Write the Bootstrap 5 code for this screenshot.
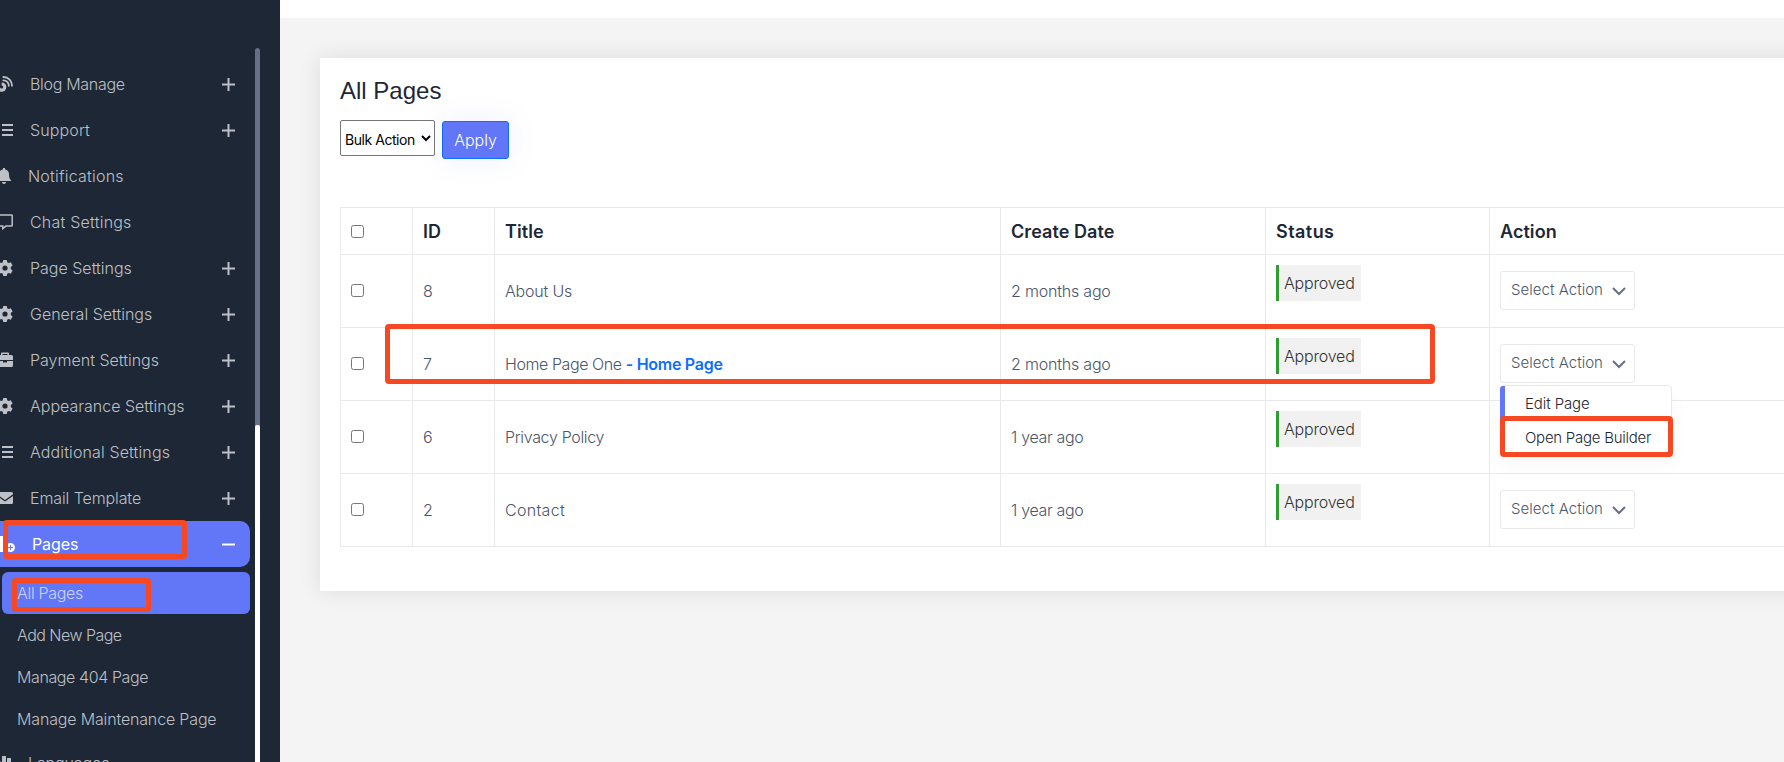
<!DOCTYPE html>
<html lang="en">
<head>
<meta charset="utf-8">
<meta name="viewport" content="width=device-width, initial-scale=1">
<title>All Pages</title>
<link href="https://cdn.jsdelivr.net/npm/bootstrap@5.3.0/dist/css/bootstrap.min.css" rel="stylesheet">
<style>
  body { font-family: Inter, "Liberation Sans", sans-serif; font-weight: 300; background: #f4f4f4; height: 762px; overflow: hidden; color: #4a566b; }
  .side { width: 280px; height: 762px; background: #1e2735; padding-top: 61px; color: #bdc0c6; overflow: hidden; }
  .side-menu { width: 250px; }
  .side-menu a { color: inherit; text-decoration: none; height: 46px; line-height: 46px; font-size: 16px; white-space: nowrap; letter-spacing: 0; }
  .side-menu .ico { width: 16px; height: 16px; margin-left: -3px; flex: none; fill: currentColor; }
  .side-menu .ico-wide { width: 18px; }
  .side-menu .txt { margin-left: 17px; }
  .side-menu .near .txt { margin-left: 15px; }
  .side-menu .pm { width: 13px; height: 13px; margin-left: auto; margin-right: 15px; flex: none; stroke: currentColor; stroke-width: 2; fill: none; }
  .side-menu .current { background: #6177f7; color: #fff; font-weight: 400; border-radius: 0 10px 10px 0; margin-bottom: 5px; }
  .side-menu .sub { height: 42px; line-height: 42px; margin-left: 2px; padding-left: 15px; }
  .side-menu .sub.on { background: #6177f7; border-radius: 6px; color: #ccd2fa; }
  .side-menu .ls-n5 { letter-spacing: -.53px; }
  .side-menu .ls-n4 { letter-spacing: -.4px; }
  .side-menu .ls-n3 { letter-spacing: -.3px; }
  .side-menu .ls-n15 { letter-spacing: -.16px; }
  .side-menu .ls-n1 { letter-spacing: -.1px; }
  .side-menu .ls-1 { letter-spacing: .12px; }
  .side-menu .ls-2 { letter-spacing: .22px; }
  .side-track { left: 255px; top: 48px; width: 5px; height: 714px; background: #667085; border-radius: 3px 3px 0 0; }
  .side-thumb { width: 5px; height: 337px; margin-top: 377px; background: #fff; border-radius: 2px 2px 0 0; }
  .topline { height: 18px; background: #fff; }
  .panel { margin: 40px 0 0 40px; width: 1500px; height: 533px; background: #fff; padding: 16px 20px; box-shadow: 0 0 20px rgba(0,0,0,.1); }
  .panel h4 { font: 400 24px/34px "Liberation Sans", sans-serif; color: #1e2735; margin: 0 0 12px; }
  .bulk { width: 95px; height: 36px; font-size: 14px; font-weight: 400; border: 1px solid #767676; border-radius: 2px; color: #000; padding: 2px 0 0; letter-spacing: -.45px; }
  .btn-apply { width: 67px; height: 38px; margin: 1px 0 0 7px; padding: 0; font-size: 16px; font-weight: 300; color: #fff; background: #6177f7; border: 1px solid #0d6efd; border-radius: 3px; box-shadow: 0 0 30px rgba(97,119,247,.1); }
  .grid-table { width: 1500px; table-layout: fixed; margin: 48px 0 0; border-collapse: collapse; }
  .grid-table th, .grid-table td { border: 1px solid #e8e9ec; padding: 0 10px; vertical-align: middle; font-size: 16px; letter-spacing: -.2px; }
  .grid-table th { height: 47px; font-size: 18px; font-weight: 600; color: #1e2735; letter-spacing: .07px; }
  .grid-table td { height: 73px; }
  .grid-table td.wide { letter-spacing: .3px; }
  .grid-table td.tight { letter-spacing: -.33px; }
  .grid-table th.wide { letter-spacing: .45px; }
  .grid-table input { display: block; width: 13px; height: 13px; margin: 0; }
  .grid-table td input { margin-bottom: 2px; }
  .grid-table b { font-weight: 600; color: #0d6efd; letter-spacing: -.28px; }
  .grid-table .home { letter-spacing: -.42px; }
  .state { display: block; width: 85px; height: 36px; line-height: 37px; margin-top: -17px; border-left: 3px solid #2e9e2e; background: #f1f1f1; color: #333; padding-left: 5px; }
  .pick { width: 135px; height: 39px; margin-top: -1px; border: 1px solid #e8e9ec; border-radius: 3px; background: #fff; padding: 0 8px 0 10px; font-size: 15px; font-weight: 300; color: #4a566b; letter-spacing: .03px; }
  .pick svg { width: 14px; height: 9px; fill: none; stroke: #667085; stroke-width: 2; margin-top: 1px; }
  .pick-menu { left: 0; top: 41px; width: 172px; height: 70px; background: #fff; border: 1px solid #e8e9ec; border-radius: 4px; box-shadow: 0 10px 20px rgba(0,0,0,.03); font-size: 15px; color: #1e2735; z-index: 3; letter-spacing: -.26px; }
  .pick-menu div { height: 34px; line-height: 35px; padding-left: 24px; }
  .pick-menu .hot { border-left: 5px solid #6177f7; padding-left: 20px; margin-left: -1px; border-radius: 3px 0 0 0; letter-spacing: -.1px; }
  .ring { border: 5px solid #f64823; border-radius: 4px; z-index: 5; pointer-events: none; }
  .ring-pages { left: 3px; top: 520px; width: 184px; height: 39px; }
  .ring-all { left: 12px; top: 578px; width: 139px; height: 34px; }
  .ring-row { left: 385px; top: 324px; width: 1050px; height: 60px; }
  .ring-open { left: 1500px; top: 416px; width: 173px; height: 41px; }
</style>
</head>
<body class="d-flex position-relative">
<svg class="d-none">
  <symbol id="plus" viewBox="0 0 13 13"><path d="M0 6.5h13M6.500 0v13"/></symbol>
  <symbol id="minus" viewBox="0 0 13 13"><path d="M0 6.500h13"/></symbol>
  <symbol id="gear" viewBox="0 0 16 16"><path fill-rule="evenodd" d="M6.200 0h3.600l.4 2.300 1.400.8 2.200-.8 1.800 3.100-1.800 1.500v2.200l1.800 1.500-1.800 3.100-2.200-.8-1.400.8-.4 2.300H6.200l-.4-2.300-1.400-.8-2.200.8L.4 10.600l1.800-1.500V6.900L.4 5.400l1.800-3.100 2.200.8 1.400-.8zM8 5.400a2.600 2.600 0 1 0 0 5.200 2.600 2.600 0 0 0 0-5.200z"/></symbol>
  <symbol id="list" viewBox="0 0 16 16"><path d="M0 2h3v2H0zm5 0h11v2H5zM0 7h3v2H0zm5 0h11v2H5zM0 12h3v2H0zm5 0h11v2H5z"/></symbol>
  <symbol id="blog" viewBox="0 0 16 16"><path d="M0 4h3v7a1.600 1.600 0 1 0 1.600-1.600V6.400A4.700 4.700 0 1 1 0 11z"/><path d="M6.300 1C11.500 1 15 4.800 15 9.800M6.300 4.300c3.500 0 5.500 2.500 5.500 5.500" fill="none" stroke="currentColor" stroke-width="1.800" stroke-linecap="round"/></symbol>
  <symbol id="bell" viewBox="0 0 16 16"><path d="M6 0h2v1.300c2.600.5 4 2.400 4 5C12 9.500 12.700 11 14 12.300V13H0v-.7C1.300 11 2 9.500 2 6.300c0-2.600 1.400-4.500 4-5zM5 14h4a2 2 0 0 1-4 0z"/></symbol>
  <symbol id="chat" viewBox="0 0 16 16"><path d="M1.500.9h13q.7 0 .7.700v9.800q0 .7-.7.700H9L5.800 14.600v-2.500H1.500q-.7 0-.7-.7V1.600q0-.7.700-.7z" fill="none" stroke="currentColor" stroke-width="1.500"/></symbol>
  <symbol id="case" viewBox="0 0 16 16"><path d="M4 3V1.500Q4 .5 5 .5h6q1 0 1 1V3h2.500Q16 3 16 4.500V8H0V4.500Q0 3 1.500 3zm1.500 0h5V2h-5zM0 9h6v1.500h4V9h6v4.500q0 1.500-1.500 1.500h-13Q0 15 0 13.500z"/></symbol>
  <symbol id="mail" viewBox="0 0 16 16"><path d="M1.500 2h13Q16 2 16 3.500v.8L8 10 0 4.300v-.8Q0 2 1.500 2zM0 6l8 5.600L16 6v6.500q0 1.500-1.500 1.500h-13Q0 14 0 12.500z"/></symbol>
  <symbol id="pageadd" viewBox="0 0 18 16"><path d="M0 0h6l5 5v1.500A5.500 5.500 0 0 0 8.500 15.600L8 16H0z"/><path fill-rule="evenodd" d="M13.500 7a4.500 4.500 0 1 1 0 9 4.500 4.500 0 0 1 0-9zm-.5 2v2h-2v1h2v2h1v-2h2v-1h-2V9z"/></symbol>
  <symbol id="bars" viewBox="0 0 16 16"><path d="M0 6h3.500v10H0zM5.500 1h3q.5 0 .5.500V16H5V1.500q0-.5.500-.5zM10.500 3h3q.5 0 .5.500V16h-4V3.500q0-.5.500-.5z"/></symbol>
</svg>

<aside class="side flex-shrink-0 position-relative">
  <nav class="side-menu d-flex flex-column">
    <a class="d-flex align-items-center" href="#"><svg class="ico"><use href="#blog"/></svg><span class="txt ls-n3">Blog Manage</span><svg class="pm"><use href="#plus"/></svg></a>
    <a class="d-flex align-items-center" href="#"><svg class="ico"><use href="#list"/></svg><span class="txt ls-1">Support</span><svg class="pm"><use href="#plus"/></svg></a>
    <a class="d-flex align-items-center near" href="#"><svg class="ico"><use href="#bell"/></svg><span class="txt ls-2">Notifications</span></a>
    <a class="d-flex align-items-center" href="#"><svg class="ico"><use href="#chat"/></svg><span class="txt ls-2">Chat Settings</span></a>
    <a class="d-flex align-items-center" href="#"><svg class="ico"><use href="#gear"/></svg><span class="txt">Page Settings</span><svg class="pm"><use href="#plus"/></svg></a>
    <a class="d-flex align-items-center" href="#"><svg class="ico"><use href="#gear"/></svg><span class="txt">General Settings</span><svg class="pm"><use href="#plus"/></svg></a>
    <a class="d-flex align-items-center" href="#"><svg class="ico"><use href="#case"/></svg><span class="txt">Payment Settings</span><svg class="pm"><use href="#plus"/></svg></a>
    <a class="d-flex align-items-center" href="#"><svg class="ico"><use href="#gear"/></svg><span class="txt">Appearance Settings</span><svg class="pm"><use href="#plus"/></svg></a>
    <a class="d-flex align-items-center" href="#"><svg class="ico"><use href="#list"/></svg><span class="txt ls-1">Additional Settings</span><svg class="pm"><use href="#plus"/></svg></a>
    <a class="d-flex align-items-center" href="#"><svg class="ico"><use href="#mail"/></svg><span class="txt ls-n1">Email Template</span><svg class="pm"><use href="#plus"/></svg></a>
    <a class="d-flex align-items-center current" href="#"><svg class="ico ico-wide"><use href="#pageadd"/></svg><span class="txt ls-n1">Pages</span><svg class="pm"><use href="#minus"/></svg></a>
    <a class="sub on ls-n3" href="#">All Pages</a>
    <a class="sub ls-n5" href="#">Add New Page</a>
    <a class="sub ls-n4" href="#">Manage 404 Page</a>
    <a class="sub ls-n15" href="#">Manage Maintenance Page</a>
    <a class="d-flex align-items-center near" href="#"><svg class="ico"><use href="#bars"/></svg><span class="txt ls-n1">Languages</span></a>
  </nav>
  <div class="side-track position-absolute overflow-hidden"><div class="side-thumb"></div></div>
</aside>

<main class="flex-grow-1 overflow-hidden">
  <div class="topline"></div>
  <section class="panel">
    <h4>All Pages</h4>
    <div class="d-flex align-items-start">
      <select class="bulk bg-white"><option>Bulk Action</option></select>
      <button class="btn btn-apply">Apply</button>
    </div>
    <table class="grid-table">
      <colgroup><col width="72"><col width="82"><col width="506"><col width="265"><col width="224"><col></colgroup>
      <thead><tr><th><input type="checkbox"></th><th>ID</th><th>Title</th><th>Create Date</th><th class="wide">Status</th><th>Action</th></tr></thead>
      <tbody>
        <tr><td><input type="checkbox"></td><td>8</td><td>About Us</td><td>2 months ago</td><td><div class="state">Approved</div></td><td><button class="pick d-flex align-items-center justify-content-between"><span>Select Action</span><svg viewBox="0 0 14 9"><path d="M1 1l6 6 6-6"/></svg></button></td></tr>
        <tr><td><input type="checkbox"></td><td>7</td><td class="home">Home Page One <b>- Home Page</b></td><td>2 months ago</td><td><div class="state">Approved</div></td><td><div class="position-relative"><button class="pick d-flex align-items-center justify-content-between"><span>Select Action</span><svg viewBox="0 0 14 9"><path d="M1 1l6 6 6-6"/></svg></button><div class="pick-menu position-absolute"><div class="hot">Edit Page</div><div>Open Page Builder</div></div></div></td></tr>
        <tr><td><input type="checkbox"></td><td>6</td><td class="tight">Privacy Policy</td><td class="tight">1 year ago</td><td><div class="state">Approved</div></td><td></td></tr>
        <tr><td><input type="checkbox"></td><td>2</td><td class="wide">Contact</td><td class="tight">1 year ago</td><td><div class="state">Approved</div></td><td><button class="pick d-flex align-items-center justify-content-between"><span>Select Action</span><svg viewBox="0 0 14 9"><path d="M1 1l6 6 6-6"/></svg></button></td></tr>
      </tbody>
    </table>
  </section>
</main>

<div class="ring ring-pages position-absolute"></div>
<div class="ring ring-all position-absolute"></div>
<div class="ring ring-row position-absolute"></div>
<div class="ring ring-open position-absolute"></div>
<script src="https://cdn.jsdelivr.net/npm/bootstrap@5.3.0/dist/js/bootstrap.bundle.min.js"></script>
</body>
</html>
